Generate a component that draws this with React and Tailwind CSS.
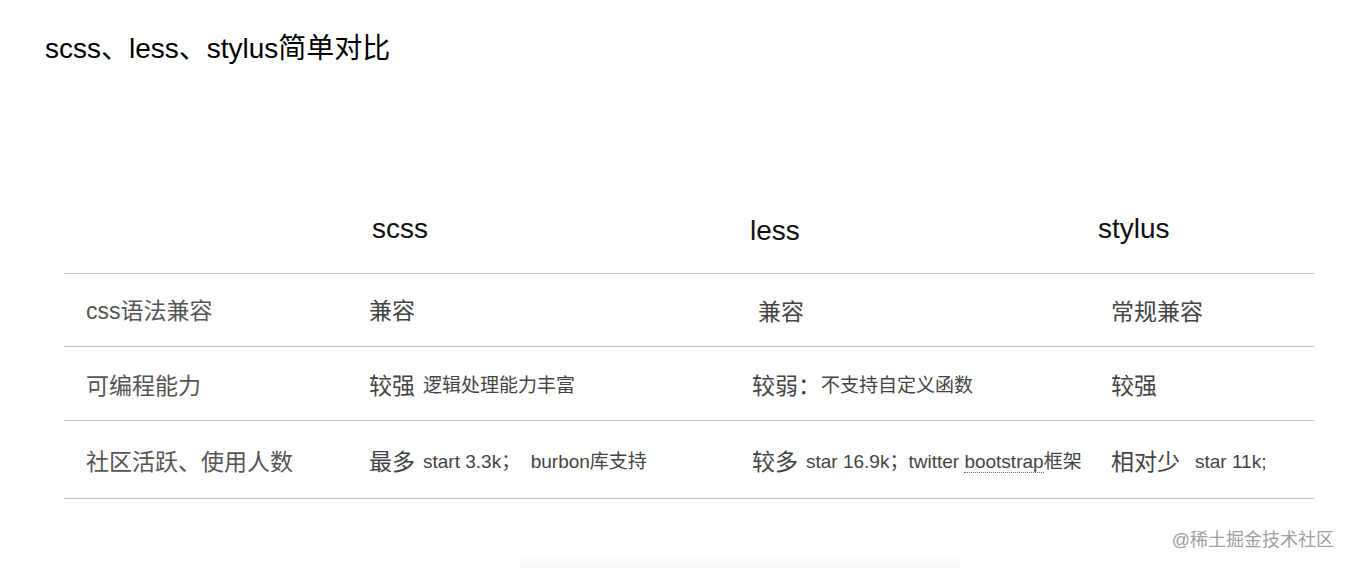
import React from 'react';

const font = { fontFamily: '"Liberation Sans", "Noto Sans CJK SC", sans-serif' };

const rows = [
    {
        label: 'css语法兼容',
        scss: <span className="text-[23px]">兼容</span>,
        less: <span className="pl-[6px] pt-[3px] text-[23px]">兼容</span>,
        stylus: <span className="pt-[3px] text-[23px]">常规兼容</span>,
        h: 'h-[73px] pt-[2px]',
    },
    {
        label: '可编程能力',
        scss: (
            <>
                <span className="text-[23px]">较强</span>
                <span className="ml-[8px] text-[19px]">逻辑处理能力丰富</span>
            </>
        ),
        less: (
            <>
                <span className="text-[23px]">较弱：</span>
                <span className="text-[19px]">不支持自定义函数</span>
            </>
        ),
        stylus: <span className="text-[23px]">较强</span>,
        h: 'h-[74px] pt-[5px]',
    },
    {
        label: '社区活跃、使用人数',
        scss: (
            <>
                <span className="text-[23px]">最多</span>
                <span className="ml-[8px] text-[19px] whitespace-pre">start 3.3k；  burbon库支持</span>
            </>
        ),
        less: (
            <>
                <span className="text-[23px]">较多</span>
                <span className="ml-[8px] text-[19px]">
                    star 16.9k；twitter <span className="border-b border-dotted border-gray-500">bootstrap</span>框架
                </span>
            </>
        ),
        stylus: (
            <>
                <span className="text-[23px]">相对少</span>
                <span className="ml-[15px] text-[19px]">star 11k;</span>
            </>
        ),
        h: 'h-[78px] pt-[6px]',
    },
];

const App = () => {
    return (
        <div className="w-[1351px] h-[568px] overflow-hidden bg-white" style={font}>
            {/* Title */}
            <h1 className="pt-[32px] pl-[45px] text-[28px] leading-[34px] text-black">
                scss、less、stylus简单对比
            </h1>

            {/* Comparison table */}
            <div className="mt-[119px] ml-[64px] w-[1250px]">
                <div className="grid grid-cols-[305px_383px_359px_203px] h-[89px] items-center border-b border-[#c2c2c2] text-[28px] text-[#111]">
                    <div></div>
                    <div className="pl-[3px]">scss</div>
                    <div className="-ml-[2px] pt-[4px]">less</div>
                    <div className="-ml-[13px]">stylus</div>
                </div>
                {rows.map((r) => (
                    <div
                        key={r.label}
                        className={`grid grid-cols-[305px_383px_359px_203px] ${r.h} items-center border-b border-[#c2c2c2] text-[#444]`}
                    >
                        <div className="pl-[22px] text-[23px] text-[#555]">{r.label}</div>
                        <div className="flex items-center">{r.scss}</div>
                        <div className="flex items-center">{r.less}</div>
                        <div className="flex items-center">{r.stylus}</div>
                    </div>
                ))}
            </div>

            {/* Watermark */}
            <div className="flex justify-end pr-[17px] mt-[30px] text-[18px] leading-[22px] text-[#a0a0a0]">
                @稀土掘金技术社区
            </div>
            <div className="ml-[520px] mt-[4px] w-[440px] h-[16px] bg-gradient-to-b from-white to-[#f4f4f4]"></div>
        </div>
    );
};

export default App;
